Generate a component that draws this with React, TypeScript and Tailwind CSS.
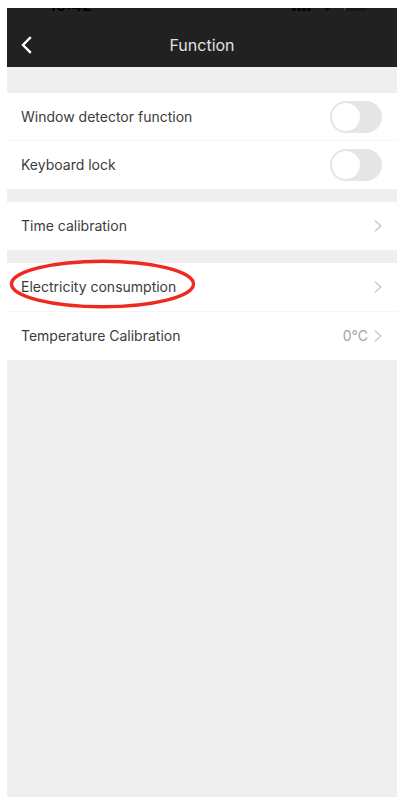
import { useState, type ReactNode } from 'react';

const BackIcon = () => (
  <svg width="12" height="18" viewBox="0 0 12 18" fill="none" aria-hidden="true">
    <path d="M9.8 1.2 2 9l7.8 7.8" stroke="#fff" strokeWidth="2.4" />
  </svg>
);

const ChevronIcon = () => (
  <svg width="8" height="12" viewBox="0 0 8 12" fill="none" aria-hidden="true">
    <path d="M1 0.7 6.8 6 1 11.3" stroke="#c8c8c8" strokeWidth="1.4" />
  </svg>
);

// Only the lower edge of the system status bar shows above the title
const StatusBar = () => (
  <div className="flex h-[15px] items-start justify-between overflow-hidden pl-[42px] pr-7">
    <div className="flex h-[3px] items-end overflow-hidden">
      <span className="text-base leading-3 font-semibold text-black">10:42</span>
    </div>
    <svg width="78" height="4" viewBox="0 0 78 4" aria-hidden="true">
      <path d="M1 0h4v3H1zM6 0h4v3H6zM11 0h4v3h-4zM16 0h4v3h-4z" fill="#080808" />
      <path d="M33 0h6l-3 3z" fill="#080808" />
      <path d="M53 0h2v2h-2z" fill="#7a2430" />
      <path d="M55 0h21q0 3-3 3H58q-3 0-3-3z" fill="#161616" />
    </svg>
  </div>
);

const Group = ({ children }: { children: ReactNode }) => (
  <section className="divide-y divide-[#f6f6f6] bg-white">{children}</section>
);

const rowClass = 'flex min-h-12 w-full items-center justify-between pl-3.5 pr-[15px] text-left cursor-pointer';

const ToggleRow = ({ label }: { label: string }) => {
  const [on, setOn] = useState(false);

  return (
    <label className={rowClass}>
      <span>{label}</span>
      <input
        type="checkbox"
        role="switch"
        checked={on}
        onChange={(e) => setOn(e.target.checked)}
        className="flex h-8 w-[52px] cursor-pointer appearance-none items-center rounded-full bg-[#e5e5e5] px-0.5 before:size-7 before:rounded-full before:bg-white before:transition-transform checked:bg-green-500 checked:before:translate-x-5"
      />
    </label>
  );
};

const LinkRow = ({ label, value }: { label: string; value?: string }) => (
  <button type="button" className={rowClass}>
    <span>{label}</span>
    <span className="flex items-center gap-1.5 text-[#a3a3a3]">
      {value}
      <ChevronIcon />
    </span>
  </button>
);

export default function App() {
  return (
    <div className="flex min-h-screen flex-col bg-white px-[7px] pt-2 pb-1 font-['Inter',sans-serif] text-sm text-[#3c3c3c]">
      <div className="flex flex-1 flex-col bg-[#efefef]">
        <header className="bg-[#212121]">
          <StatusBar />
          <div className="grid h-11 grid-cols-[1fr_auto_1fr] items-center px-3.5">
            <button type="button" aria-label="Back" className="w-3 cursor-pointer">
              <BackIcon />
            </button>
            <h1 className="text-base text-[#e2e2e2]">Function</h1>
          </div>
        </header>

        <main className="flex flex-col gap-[13px] pt-[26px]">
          <Group>
            <ToggleRow label="Window detector function" />
            <ToggleRow label="Keyboard lock" />
          </Group>

          <Group>
            <LinkRow label="Time calibration" />
          </Group>

          <Group>
            <div className="relative">
              <LinkRow label="Electricity consumption" />
              {/* Hand-drawn highlight around the label */}
              <svg
                width="188"
                height="50"
                viewBox="0 0 188 50"
                fill="none"
                aria-hidden="true"
                className="pointer-events-none absolute -top-1 left-0.5"
              >
                <ellipse cx="93.5" cy="25" rx="91" ry="22.7" stroke="#ee2a1e" strokeWidth="3.4" />
              </svg>
            </div>
            <LinkRow label="Temperature Calibration" value="0°C" />
          </Group>
        </main>
      </div>
    </div>
  );
}
